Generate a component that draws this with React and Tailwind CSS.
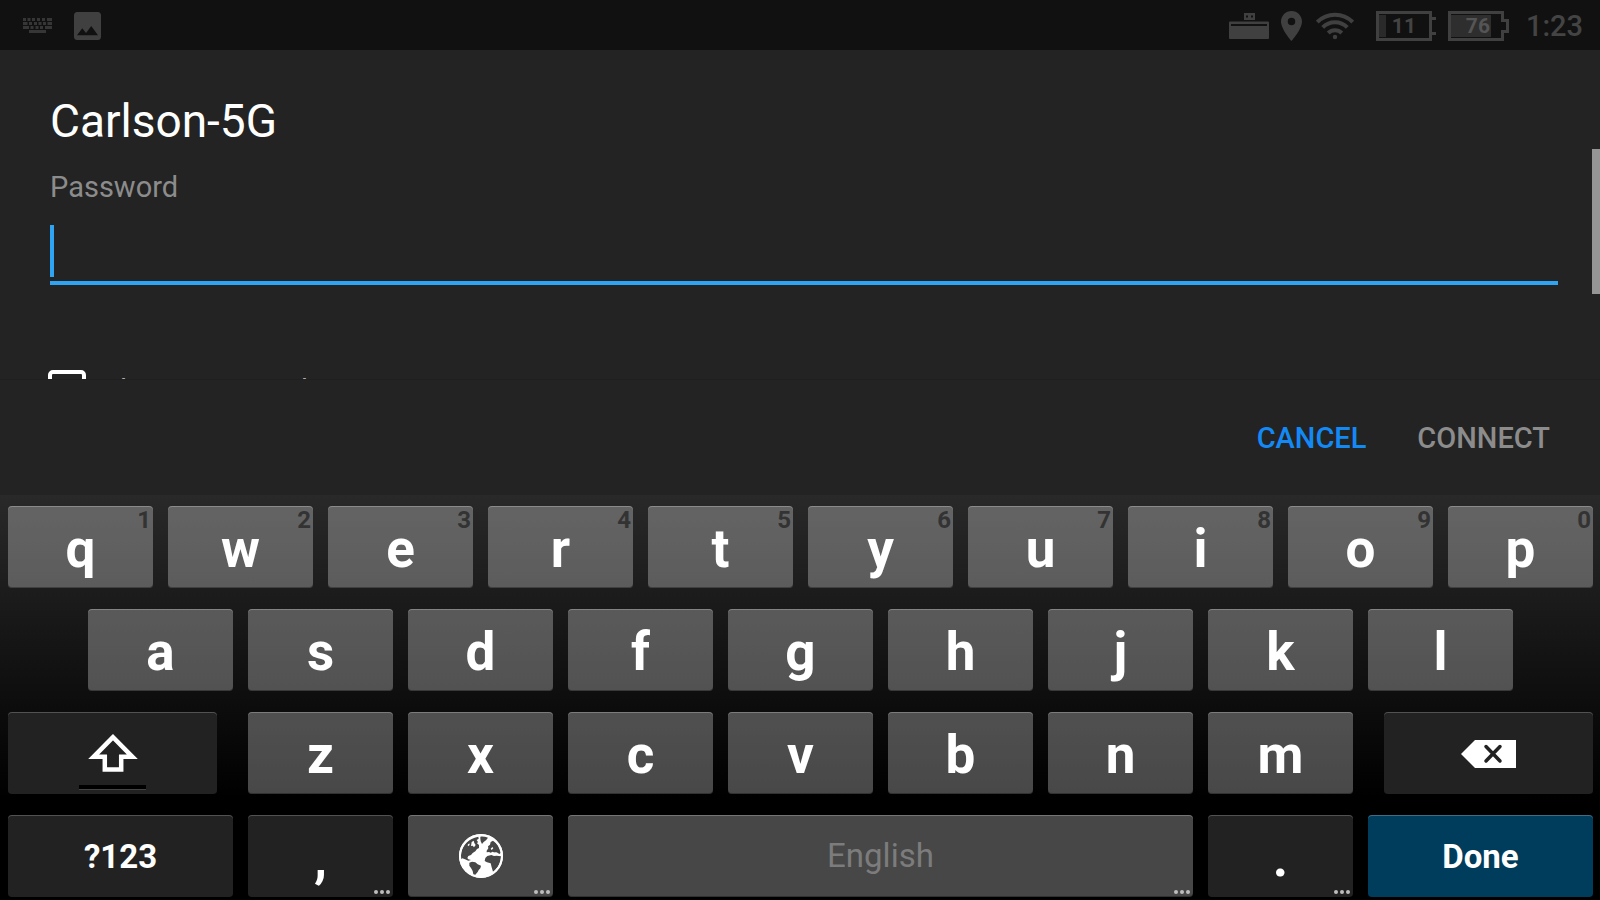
import React, { useState } from 'react';

const TOP_ROW = ['q', 'w', 'e', 'r', 't', 'y', 'u', 'i', 'o', 'p'];
const HOME_ROW = ['a', 's', 'd', 'f', 'g', 'h', 'j', 'k', 'l'];
const BOTTOM_ROW = ['z', 'x', 'c', 'v', 'b', 'n', 'm'];

const KEY_STYLES = {
  letter: 'bg-white/28 shadow-[inset_0_1px_0_rgba(255,255,255,0.25),inset_0_-1px_0_rgba(0,0,0,0.3)]',
  system: 'bg-[#222222] shadow-[inset_0_1px_0_rgba(255,255,255,0.22)]',
  action: 'bg-[#003c5c] shadow-[inset_0_1px_0_rgba(255,255,255,0.25)]',
};

// ---------- Status bar icons ----------

function KeyboardIcon() {
  return (
    <svg width="29" height="16" viewBox="0 0 29 16" fill="none" stroke="#363636" strokeWidth="3" aria-hidden="true">
      <path d="M0 1.500h3M4.500 1.500h3M9 1.500h3M14 1.500h3M19 1.500h3M24 1.500h5" />
      <path d="M0 5.500h4.500M6 5.500h3M11 5.500h3M15.500 5.500h3M20 5.500h3M24.500 5.500h4.500" />
      <path d="M0 9.500h6M7.500 9.500h3M12.500 9.500h3M17 9.500h3M22 9.500h7" />
      <path d="M6 13.500h17" />
    </svg>
  );
}

function ImageIcon() {
  return (
    <svg width="27" height="28" viewBox="3 3 18 18" preserveAspectRatio="none" fill="#404040" aria-hidden="true">
      <path d="M21 19V5c0-1.100-.9-2-2-2H5c-1.100 0-2 .9-2 2v14c0 1.100.9 2 2 2h14c1.100 0 2-.9 2-2zM8.500 13.500l2.500 3L14.500 12l4.500 6H5l3.500-4.500z" />
    </svg>
  );
}

function DeviceIcon() {
  return (
    <svg width="40" height="26" viewBox="0 0 40 26" aria-hidden="true">
      <path fill="#404040" fillRule="evenodd" d="M15 0h11v7H15zM17 2.500v2h2v-2zM22 2.500v2h2v-2z" />
      <path fill="#404040" fillRule="evenodd" d="M1 8.500h38a1 1 0 0 1 1 1V25a1 1 0 0 1-1 1H1a1 1 0 0 1-1-1V9.500a1 1 0 0 1 1-1zM2 11v2h36v-2z" />
    </svg>
  );
}

function PinIcon() {
  return (
    <svg width="21" height="30" viewBox="5 2 14 20" fill="#404040" aria-hidden="true">
      <path d="M12 2C8.130 2 5 5.130 5 9c0 5.250 7 13 7 13s7-7.750 7-13c0-3.870-3.130-7-7-7zm0 9.500a2.500 2.500 0 1 1 0-5 2.500 2.500 0 0 1 0 5z" />
    </svg>
  );
}

function WifiIcon() {
  return (
    <svg width="38" height="28" viewBox="0 0 38 28" fill="none" stroke="#404040" strokeWidth="4" aria-hidden="true">
      <path d="M1.300 10a25 25 0 0 1 35.400 0" />
      <path d="M6.700 15.400a17.400 17.400 0 0 1 24.600 0" />
      <path d="M12.200 21a9.600 9.600 0 0 1 13.600 0" />
      <circle cx="19" cy="25" r="2.200" fill="#404040" stroke="none" />
    </svg>
  );
}

function Battery({ level, open }) {
  return (
    <div className="relative flex h-[30px] w-[61px] items-center">
      <svg width="61" height="30" viewBox="0 0 61 30" fill="none" className="absolute inset-0" aria-hidden="true">
        <rect x="3" y="4" width={open ? 7 : 40} height="22" fill={open ? '#2a2a2a' : '#2e2e2e'} />
        {open ? (
          <path d="M2 1.500h52.500v27H1.500v-27zM55 7.500h5M55 22.500h5" stroke="#404040" strokeWidth="3" />
        ) : (
          <path d="M2 1.500h52.500v8h5v11h-5v8H1.500v-27z" stroke="#404040" strokeWidth="3" />
        )}
      </svg>
      <span className={`relative w-[56px] text-center text-[21px] leading-[28px] font-bold ${open ? 'text-[#444444]' : 'pl-1 text-[#555555]'}`}>
        {level}
      </span>
    </div>
  );
}

// ---------- Key icons ----------

function ShiftIcon() {
  return (
    <svg width="50" height="38" viewBox="0 0 50 38" fill="none" stroke="#ffffff" strokeWidth="4.500" aria-hidden="true">
      <path d="M25 3.200L5.600 22.800h11.200v12.600h16.400V22.800h11.200z" />
    </svg>
  );
}

function BackspaceIcon() {
  return (
    <svg width="55" height="28" viewBox="0 0 55 28" aria-hidden="true">
      <path d="M0 14L14 0h41v28H14z" fill="#ffffff" />
      <path d="M25 6.500l14 14.500M39 6.500L25 21" stroke="#222222" strokeWidth="3.500" strokeLinecap="round" />
    </svg>
  );
}

function GlobeIcon() {
  return (
    <svg width="44" height="44" viewBox="18 18 132 132" aria-hidden="true">
      <circle cx="84" cy="84" r="66" fill="#ffffff" />
      <g fill="#474747">
        {/* North America */}
        <path d="M24 94c-2-18 4-38 18-51 8-8 18-13 34-17l1 6-6 4 4 6-3 4 6 5 0 9-6 3-5 7-8 5-5 6-8 3-3 6 3 4 8 2-8 2-10-4-8-3z" />
        {/* Greenland */}
        <path d="M82 26c9-1 15 0 23 3l-6 8-7 5-5 6-4-8-1-8z" />
        {/* South America */}
        <path d="M49 104l8-3 10 2 7 6 10 4-2 8-5 5-3 6-7 8-6-1-2-10-5-9-5-7z" />
        {/* Europe and Asia */}
        <path d="M101 68l5-7-1-6 6-5 2-8 7-4c12 8 20 20 23 37l-4 3-8-5-6 2-6-4-6 3-5-2-7 1z" />
        {/* Africa */}
        <path d="M103 84l12-3 8 3 8-1 13 2c-1 20-9 35-24 46l-4-13-3-12-11-3-7-4 2-9z" />
      </g>
      <path d="M56 42l6-4 2 7 4 6-5 7-4-5-5 1zM44 50l5-4 1 5-5 4zM113 62l5-5 3 4-5 5zM119 74l8-1 7 4-8 3z" fill="#ffffff" />
      <circle cx="84" cy="84" r="63" fill="none" stroke="#ffffff" strokeWidth="6" />
    </svg>
  );
}

function MoreDots() {
  return (
    <svg width="16" height="4" viewBox="0 0 16 4" fill="#bdbdbd" className="absolute right-[3px] bottom-[3px]" aria-hidden="true">
      <circle cx="2" cy="2" r="2" />
      <circle cx="8" cy="2" r="2" />
      <circle cx="14" cy="2" r="2" />
    </svg>
  );
}

// ---------- Keyboard ----------

function Key({ variant = 'letter', className = 'col-span-2 pt-1 text-[53px]', hint, more, label, onClick, children }) {
  return (
    <button
      type="button"
      aria-label={label}
      onClick={onClick}
      className={`relative flex h-[82px] items-center justify-center rounded-[4px] leading-[60px] font-bold text-white ${KEY_STYLES[variant]} ${className}`}
    >
      {children}
      {hint && (
        <span className="absolute top-0 right-[2px] text-[24px] leading-[28px] text-[#333333]">{hint}</span>
      )}
      {more && <MoreDots />}
    </button>
  );
}

function Keyboard({ onType, onDelete }) {
  return (
    <div className="grid grid-cols-20 gap-x-[15px] gap-y-[21px] bg-linear-to-b/srgb from-[#292929] to-black to-75% pt-[11px] pr-[7px] pb-[3px] pl-2">
      {TOP_ROW.map((k, i) => (
        <Key key={k} hint={String((i + 1) % 10)} onClick={() => onType(k)}>{k}</Key>
      ))}

      <div />
      {HOME_ROW.map((k) => (
        <Key key={k} onClick={() => onType(k)}>{k}</Key>
      ))}
      <div />

      <Key variant="system" className="col-span-3 mr-4" label="Shift">
        <ShiftIcon />
        <span className="absolute bottom-[4px] h-[5px] w-[67px] border-b border-[#444444] bg-black" />
      </Key>
      {BOTTOM_ROW.map((k) => (
        <Key key={k} onClick={() => onType(k)}>{k}</Key>
      ))}
      <Key variant="system" className="col-span-3 ml-4 pt-[2px]" label="Backspace" onClick={onDelete}>
        <BackspaceIcon />
      </Key>

      <Key variant="system" className="col-span-3 pt-[2px] text-[33px]">?123</Key>
      <Key variant="system" more onClick={() => onType(',')}>,</Key>
      <Key className="col-span-2" more label="Change language">
        <GlobeIcon />
      </Key>
      <Key className="col-span-8" more onClick={() => onType(' ')}>
        <span className="text-[33px] font-normal text-[#7c7c7c]">English</span>
      </Key>
      <Key variant="system" more onClick={() => onType('.')}>.</Key>
      <Key variant="action" className="col-span-3 pt-[2px] text-[33px]">Done</Key>
    </div>
  );
}

export default function App() {
  const [password, setPassword] = useState('');
  const [visible, setVisible] = useState(false);

  return (
    <div className="flex h-screen flex-col overflow-hidden bg-[#232323] font-[Roboto,sans-serif]">
      {/* Status bar */}
      <header className="flex h-[50px] shrink-0 items-center justify-between bg-[#111111] pt-px pr-[17px] pl-[23px]">
        <div className="flex items-center gap-[22px]">
          <KeyboardIcon />
          <ImageIcon />
        </div>
        <div className="flex items-center">
          <div className="mr-[22px] flex items-center gap-3">
            <DeviceIcon />
            <PinIcon />
            <span className="ml-[2px]"><WifiIcon /></span>
          </div>
          <div className="mr-[17px] flex items-center gap-[11px]">
            <Battery level="11" open />
            <Battery level="76" />
          </div>
          <span className="text-[29px] leading-[36px] font-medium text-[#444444]">1:23</span>
        </div>
      </header>

      {/* Network form */}
      <main className="relative min-h-0 flex-1 overflow-hidden pt-[44px] pr-[42px] pl-[50px]">
        <h1 className="text-[46px] leading-[54px] text-white">Carlson-5G</h1>
        <label htmlFor="password" className="mt-[21px] block text-[29px] leading-[36px] text-[#8c8c8c]">
          Password
        </label>
        <div className="relative mt-4">
          <input
            id="password"
            type={visible ? 'text' : 'password'}
            value={password}
            onChange={(e) => setPassword(e.target.value)}
            className="block h-16 w-full border-b-4 border-[#2fa4f3] bg-transparent text-[32px] text-white caret-[#2fa4f3] outline-none"
          />
          {password === '' && <span className="absolute top-1 left-0 h-[52px] w-1 bg-[#2fa4f3]" />}
        </div>
        <div className="mt-[84px] flex items-center gap-[17px]">
          <input
            id="show-password"
            type="checkbox"
            checked={visible}
            onChange={(e) => setVisible(e.target.checked)}
            className="-ml-[2px] size-[38px] shrink-0 appearance-none rounded-[5px] border-4 border-white checked:bg-[#2fa4f3]"
          />
          <label htmlFor="show-password" className="pt-[3px] text-[29px] leading-[36px] text-[#b0b0b0]">
            Show password
          </label>
        </div>
        <div className="absolute top-[99px] right-0 h-[145px] w-2 bg-[#959595]" />
      </main>

      {/* Actions */}
      <footer className="flex h-[116px] shrink-0 items-center justify-end gap-[51px] border-t border-[#1f1f1f] pr-[50px] text-[29px] leading-[36px] font-medium">
        <button type="button" className="text-[#1389f5]">CANCEL</button>
        <button type="button" className="text-[#8c8c8c]">CONNECT</button>
      </footer>

      <Keyboard
        onType={(k) => setPassword((p) => p + k)}
        onDelete={() => setPassword((p) => p.slice(0, -1))}
      />
    </div>
  );
}
